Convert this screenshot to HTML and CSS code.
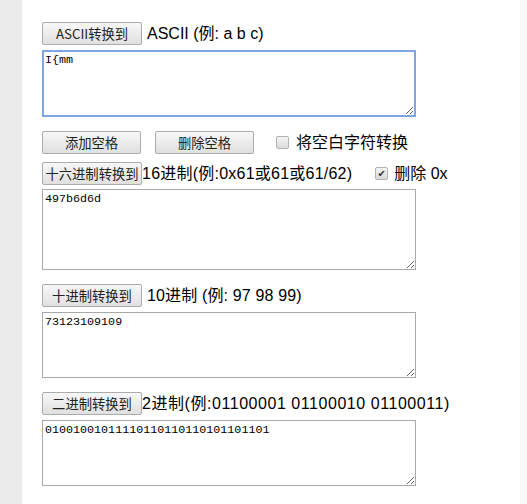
FILE: index.html
```html
<!DOCTYPE html>
<html>
<head>
    <title>ASCII 转换</title>
    <link rel="stylesheet" href="styles.css">
</head>
<body>
    <div class="page">
        <div class="side-left"></div>
        <div class="main">
            <div class="row first">
                <button class="btn">ASCII转换到</button><span class="label gap">ASCII (例: a b c)</span>
            </div>
            <textarea class="box focus">I{mm</textarea>

            <div class="row tools">
                <button class="btn small">添加空格</button>
                <button class="btn small second">删除空格</button>
                <span class="check space-check"></span><span class="label">将空白字符转换</span>
            </div>

            <div class="row hex">
                <button class="btn">十六进制转换到</button><span class="label hex-label">16进制(例:0x61或61或61/62)</span>
                <span class="check hex-check checked">✔</span><span class="label">删除 0x</span>
            </div>
            <textarea class="box tall">497b6d6d</textarea>

            <div class="row section">
                <button class="btn">十进制转换到</button><span class="label gap dec-label">10进制 (例: 97 98 99)</span>
            </div>
            <textarea class="box">73123109109</textarea>

            <div class="row section">
                <button class="btn">二进制转换到</button><span class="label bin-label">2进制(例:01100001 01100010 01100011)</span>
            </div>
            <textarea class="box">01001001011110110110110101101101</textarea>
        </div>
        <div class="side-right"></div>
    </div>
</body>
</html>
```

FILE: styles.css
```css
html, body { margin: 0; padding: 0; }
body { font-family: "Liberation Sans", "Noto Sans CJK SC", sans-serif; color: #000; background: #fff; }
.page { display: flex; height: 504px; overflow: hidden; }
.side-left { width: 22px; background: #ebebeb; flex-shrink: 0; }
.side-right { width: 7px; background: #f8f8f8; flex-shrink: 0; }
.main { flex: 1; padding: 22px 0 0 20px; background: #fff; }

.row { display: flex; align-items: center; height: 23px; }
.row.tools { margin-top: 14px; }
.row.hex { margin-top: 8px; }
.row.section { margin-top: 14px; }

.btn { width: 100px; height: 23px; padding: 0; font-family: "Noto Sans CJK SC", sans-serif; font-size: 13.3px; color: #222;
       background: linear-gradient(#f7f7f7, #e0e0e0); border: 1px solid #acacac; border-radius: 2px; line-height: 20px;
       flex-shrink: 0; white-space: nowrap; overflow: visible; }
.btn.small { width: 99px; }
.btn.second { margin-left: 14px; }

.label { font-size: 16px; white-space: nowrap; line-height: 20px; }
.label.gap { margin-left: 5px; }
.hex-label { letter-spacing: 0.23px; }
.dec-label { letter-spacing: 0.15px; }
.bin-label { letter-spacing: 0.55px; }

.check { display: flex; align-items: center; justify-content: center; box-sizing: border-box; width: 13px; height: 13px;
         border: 1px solid #b2b2b2; border-radius: 2px; background: linear-gradient(#f4f4f4, #dadada);
         font-size: 10px; line-height: 1; color: #333; flex-shrink: 0; font-family: "DejaVu Sans", sans-serif; }
.space-check { margin-left: 22px; margin-right: 7px; }
.hex-check { margin-left: 23px; margin-right: 6px; }

.box { display: block; box-sizing: border-box; width: 374px; height: 66px; margin-top: 5px; padding: 2px 2px;
       font-family: "Liberation Mono", monospace; font-size: 11.7px; line-height: 14px; color: #000;
       border: 1px solid #a9a9a9; resize: both; background: #fff; }
.box.focus { border: 2px solid #7ea6e0; outline: none; padding: 1px; margin-top: 5px; height: 67px; }
.box.tall { height: 81px; margin-top: 4px; }
```
